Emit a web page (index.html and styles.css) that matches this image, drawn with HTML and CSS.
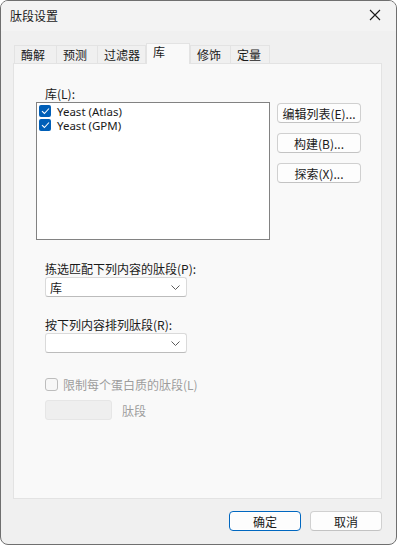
FILE: index.html
```html
<!DOCTYPE html>
<html lang="zh-CN">
<head>
  <meta charset="UTF-8" />
  <title>肽段设置</title>
  <link rel="stylesheet" href="styles.css">
</head>
<body>
  <div class="window">
    <div class="titlebar">
      <span class="title">肽段设置</span>
      <svg class="close" width="12" height="12" viewBox="0 0 12 12">
        <path d="M1 1 L11 11 M11 1 L1 11" stroke="#1a1a1a" stroke-width="1.1" fill="none"/>
      </svg>
    </div>

    <div class="tabs">
      <div class="tab" style="width:43px">酶解</div>
      <div class="tab" style="width:41px">预测</div>
      <div class="tab" style="width:48px">过滤器</div>
      <div class="tab active" style="width:44px">库</div>
      <div class="tab" style="width:41px">修饰</div>
      <div class="tab" style="width:39px">定量</div>
    </div>

    <div class="panel">
      <div class="label lib-label">库(L):</div>
      <div class="lib-row">
        <div class="listbox">
          <div class="item"><span class="check on"><svg width="9" height="8" viewBox="0 0 9 8"><path d="M1 4.2 L3.4 6.5 L8 1.5" stroke="#fff" stroke-width="1.1" fill="none"/></svg></span>Yeast (Atlas)</div>
          <div class="item"><span class="check on"><svg width="9" height="8" viewBox="0 0 9 8"><path d="M1 4.2 L3.4 6.5 L8 1.5" stroke="#fff" stroke-width="1.1" fill="none"/></svg></span>Yeast (GPM)</div>
        </div>
        <div class="side-buttons">
          <button class="btn">编辑列表(E)...</button>
          <button class="btn">构建(B)...</button>
          <button class="btn">探索(X)...</button>
        </div>
      </div>

      <div class="label filter-label">拣选匹配下列内容的肽段(P):</div>
      <div class="combo"><span>库</span><svg width="9" height="5" viewBox="0 0 9 5"><path d="M0.5 0.5 L4.5 4.5 L8.5 0.5" stroke="#5c5c5c" fill="none"/></svg></div>

      <div class="label sort-label">按下列内容排列肽段(R):</div>
      <div class="combo"><span></span><svg width="9" height="5" viewBox="0 0 9 5"><path d="M0.5 0.5 L4.5 4.5 L8.5 0.5" stroke="#5c5c5c" fill="none"/></svg></div>

      <div class="limit-row disabled">
        <span class="check off"></span>限制每个蛋白质的肽段(L)
      </div>
      <div class="count-row disabled">
        <div class="textbox"></div>
        <span>肽段</span>
      </div>
    </div>

    <div class="footer">
      <button class="btn primary">确定</button>
      <button class="btn">取消</button>
    </div>
  </div>
</body>
</html>
```

FILE: styles.css
```css
* {
  box-sizing: border-box;
}

body {
  margin: 0;
  background: #ffffff;
  font-family: "Noto Sans CJK SC", "Noto Sans", sans-serif;
  font-size: 12px;
  color: #1a1a1a;
}

.window {
  width: 397px;
  height: 545px;
  background: #f0f0f0;
  border: 1px solid #6f6f6f;
  border-radius: 8px;
  overflow: hidden;
  display: flex;
  flex-direction: column;
}

.titlebar {
  height: 30px;
  background: #f3f3f3;
  display: flex;
  align-items: center;
  justify-content: space-between;
  padding: 0 15px 0 9px;
  flex-shrink: 0;
}

.title {
  font-size: 12px;
  margin-top: -1px;
}

.close {
  margin-top: -2px;
}

.tabs {
  display: flex;
  align-items: flex-end;
  height: 32px;
  padding-left: 13px;
  flex-shrink: 0;
}

.tab {
  height: 18px;
  line-height: 17px;
  padding-left: 6px;
  background: #f0f0f0;
  border: 1px solid #e3e3e3;
  border-bottom: none;
  font-size: 12px;
  color: #1a1a1a;
}

.tab + .tab {
  border-left: none;
}

.tab.active {
  height: 21px;
  background: #f9f9f9;
  border-left: 1px solid #e3e3e3;
  margin-bottom: -1px;
  position: relative;
  z-index: 1;
  line-height: 16px;
}

.tab.active + .tab {
  border-left: 1px solid #e3e3e3;
}

.panel {
  width: 369px;
  height: 436px;
  margin-left: 12px;
  background: #f9f9f9;
  border: 1px solid #e3e3e3;
  padding: 22px 0 0 22px;
  flex-shrink: 0;
}

.label {
  margin-left: 9px;
  line-height: 16px;
  height: 16px;
}

.lib-row {
  display: flex;
  gap: 7px;
}

.listbox {
  width: 234px;
  height: 138px;
  background: #ffffff;
  border: 1px solid #828282;
  padding: 1px 0 0 2px;
}

.item {
  display: flex;
  align-items: center;
  height: 14px;
  font-family: "Noto Sans", sans-serif;
  font-size: 11.5px;
  color: #1a1a1a;
}

.check {
  width: 12px;
  height: 12px;
  border-radius: 2px;
  display: inline-flex;
  align-items: center;
  justify-content: center;
  margin-right: 6px;
  flex-shrink: 0;
}

.check.on {
  background: #005fb8;
}

.check.off {
  width: 13px;
  height: 13px;
  border: 1px solid #bdbdbd;
  border-radius: 3px;
  background: #f7f7f7;
  margin-right: 5px;
}

.side-buttons {
  display: flex;
  flex-direction: column;
  gap: 10px;
  padding-top: 1px;
}

.btn {
  width: 84px;
  height: 20px;
  background: #fdfdfd;
  border: 1px solid #d0d0d0;
  border-bottom-color: #c3c3c3;
  border-radius: 4px;
  font-family: "Noto Sans CJK SC", "Noto Sans", sans-serif;
  font-size: 12px;
  color: #1a1a1a;
  padding: 0;
  line-height: 17px;
}

.filter-label {
  margin-top: 21px;
}

.sort-label {
  margin-top: 20px;
}

.combo {
  width: 142px;
  height: 20px;
  margin-left: 9px;
  background: #ffffff;
  border: 1px solid #dadada;
  border-bottom-color: #bcbcbc;
  border-radius: 3px;
  display: flex;
  align-items: center;
  justify-content: space-between;
  padding: 0 6px 0 4px;
}

.combo span {
  line-height: 17px;
}

.limit-row {
  display: flex;
  align-items: center;
  margin: 24px 0 0 9px;
  height: 14px;
}

.disabled {
  color: #9d9d9d;
}

.count-row {
  display: flex;
  align-items: center;
  gap: 10px;
  margin: 9px 0 0 9px;
}

.textbox {
  width: 67px;
  height: 20px;
  background: #efefef;
  border: 1px solid #e6e6e6;
  border-radius: 3px;
}

.footer {
  display: flex;
  justify-content: flex-end;
  gap: 9px;
  padding: 12px 14px 0 0;
}

.footer .btn {
  width: 72px;
}

.btn.primary {
  border: 1px solid #0067c0;
  box-shadow: inset 0 0 0 1px #ffffff;
}
```
